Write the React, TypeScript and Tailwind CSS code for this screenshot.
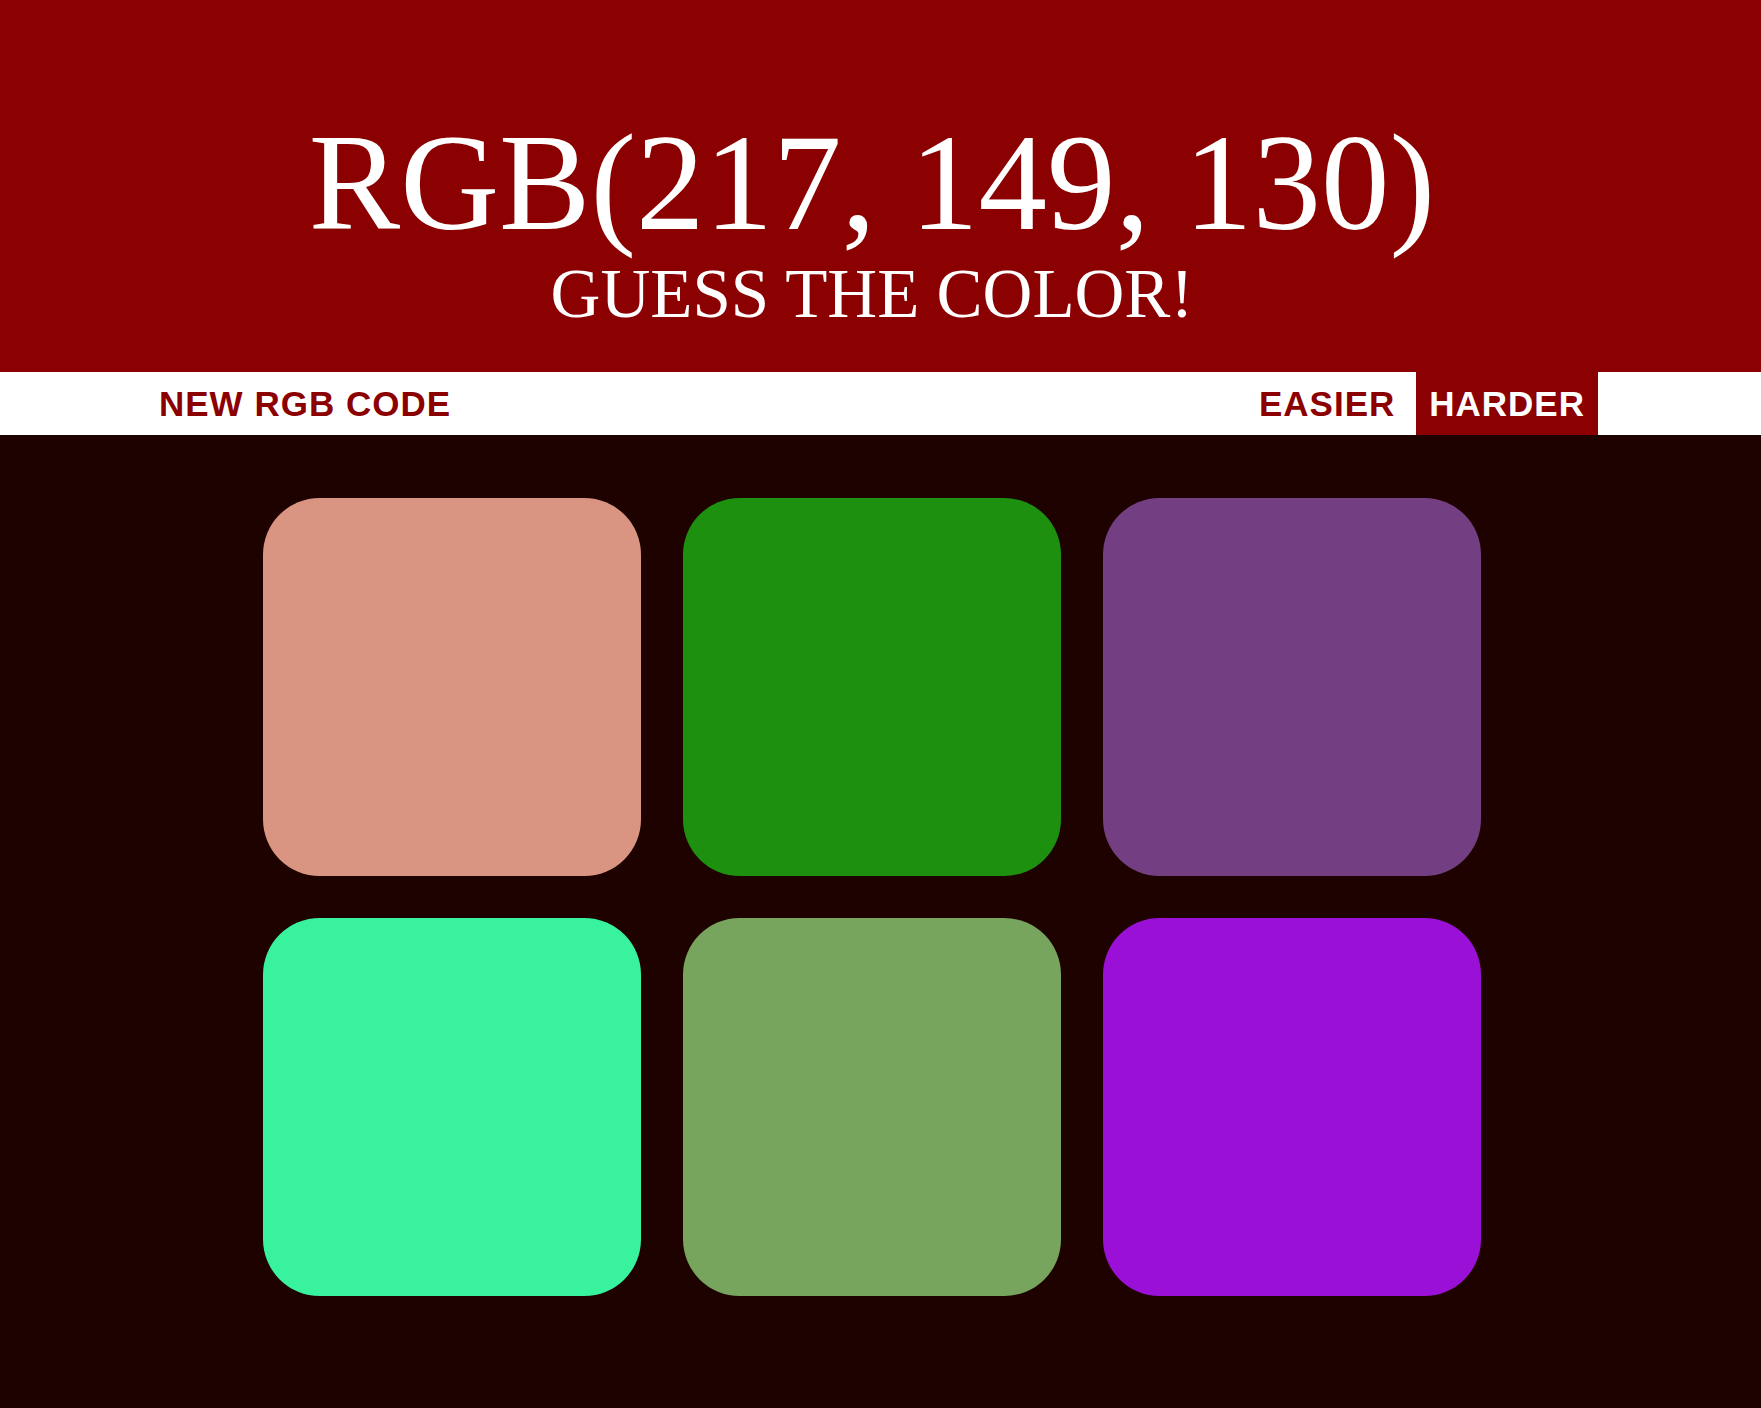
import React from "react";

const colors = ["#d99582", "#1e9010", "#743f82", "#38f29e", "#77a55e", "#9a10d6"];

export default function App() {
  return (
    <div className="min-h-screen w-full bg-[#1e0200]">
      <header className="w-full h-[372px] bg-[#8b0000]">
        <div className="w-[1744px] pt-[115px] flex flex-col items-center text-white font-['Liberation_Serif',serif]">
          <h1 className="text-[137px] leading-none font-normal whitespace-nowrap">RGB(217, 149, 130)</h1>
          <h2 className="mt-[8px] text-[69px] leading-none font-normal whitespace-nowrap">GUESS THE COLOR!</h2>
        </div>
      </header>
      <nav className="w-full h-[63px] bg-white">
        <div className="w-[1744px] h-full px-[146px] flex items-stretch justify-between font-['Liberation_Sans',Arial,sans-serif] font-bold text-[35px] tracking-[1px]">
          <button className="px-[13px] flex items-center text-[#8b0000] leading-none">NEW RGB CODE</button>
          <div className="flex items-stretch gap-[8px]">
            <button className="px-[13px] flex items-center text-[#8b0000] leading-none">EASIER</button>
            <button className="px-[13px] flex items-center bg-[#8b0000] text-white leading-none">HARDER</button>
          </div>
        </div>
      </nav>
      <main className="w-[1744px] pt-[63px] pb-[21px] flex justify-center">
        <div className="grid grid-cols-[378px_378px_378px] gap-[42px]">
          {colors.map((c, i) => (
            <div key={i} className="w-[378px] h-[378px] rounded-[15%]" style={{ backgroundColor: c }} />
          ))}
        </div>
      </main>
    </div>
  );
}
